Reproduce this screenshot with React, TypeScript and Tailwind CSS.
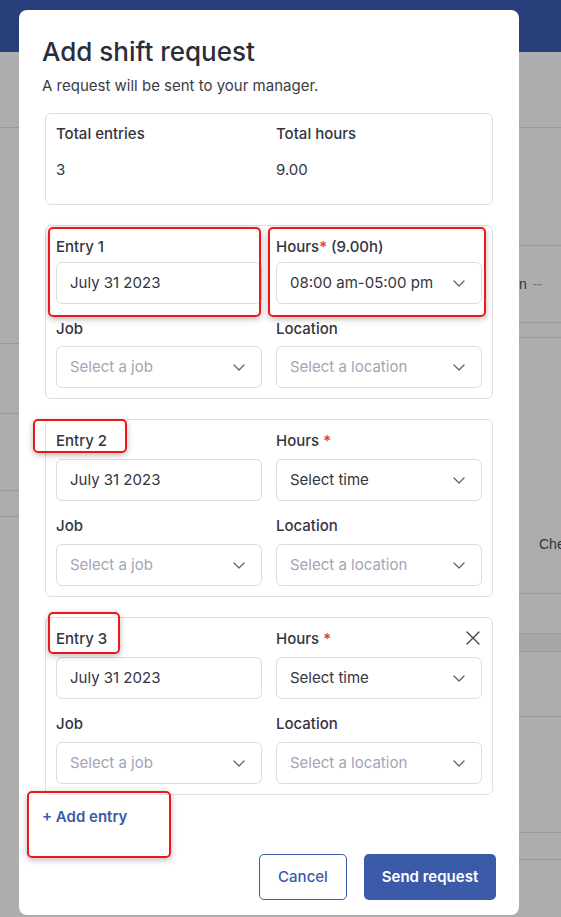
import React from "react";

const Chevron = () => (
  <svg width="12" height="7" viewBox="0 0 12 7" fill="none" className="shrink-0">
    <path d="M1 1L6 6L11 1" stroke="#5f6272" strokeWidth="1.3" strokeLinecap="round" strokeLinejoin="round" />
  </svg>
);

const CloseX = () => (
  <svg width="14" height="14" viewBox="0 0 14 14" fill="none">
    <path d="M1 1L13 13M13 1L1 13" stroke="#45474f" strokeWidth="1.4" strokeLinecap="round" />
  </svg>
);

function Field({ children, select, placeholder }: { children: React.ReactNode; select?: boolean; placeholder?: boolean }) {
  return (
    <div className="flex h-[42px] items-center justify-between rounded-md border border-[#dcdce2] bg-white pl-[13px] pr-[16px]">
      <span className={placeholder ? "text-[15px] text-[#a2a5b8]" : "text-[15px] text-[#33353f]"}>{children}</span>
      {select && <Chevron />}
    </div>
  );
}

function Entry({ n, hours, first, closable }: { n: number; hours?: string; first?: boolean; closable?: boolean }) {
  return (
    <div className="relative mx-[3px] rounded-md border border-[#dedee3] px-[10px] pb-[10px] pt-[11px]">
      {closable && (
        <div className="absolute right-[12px] top-[13px]">
          <CloseX />
        </div>
      )}
      <div className="grid grid-cols-2 gap-x-[14px]">
        <div className="flex flex-col">
          <div className="h-[20px] text-[15px] font-medium leading-[20px] text-[#33353f]">Entry {n}</div>
          <div className={first ? "mt-[5px]" : "mt-[8px]"}>
            <Field>July 31 2023</Field>
          </div>
        </div>
        <div className="flex flex-col">
          <div className="h-[20px] text-[15px] font-medium leading-[20px] text-[#33353f]">
            {first ? (
              <>
                Hours<span className="text-[#e8332f]">*</span> (9.00h)
              </>
            ) : (
              <>
                Hours <span className="text-[#e8332f]">*</span>
              </>
            )}
          </div>
          <div className={first ? "mt-[5px]" : "mt-[8px]"}>
            <Field select>{hours ?? "Select time"}</Field>
          </div>
        </div>
        <div className="mt-[15px] flex flex-col">
          <div className="h-[20px] text-[15px] font-medium leading-[20px] text-[#33353f]">Job</div>
          <div className={first ? "mt-[7px]" : "mt-[8px]"}>
            <Field select placeholder>
              Select a job
            </Field>
          </div>
        </div>
        <div className="mt-[15px] flex flex-col">
          <div className="h-[20px] text-[15px] font-medium leading-[20px] text-[#33353f]">Location</div>
          <div className={first ? "mt-[7px]" : "mt-[8px]"}>
            <Field select placeholder>
              Select a location
            </Field>
          </div>
        </div>
      </div>
    </div>
  );
}

const RedBox = ({ cls }: { cls: string }) => (
  <div className={"pointer-events-none absolute rounded-[5px] border-2 border-[#f0151b] shadow-[0_2px_6px_rgba(0,0,0,0.28)] " + cls} />
);

export default function App() {
  return (
    <div className="relative h-[917px] w-[561px] overflow-hidden bg-[#adadad] font-['Inter','Noto_Sans',sans-serif]">
      {/* background page */}
      <div className="flex h-full flex-col">
        <div className="h-[52px] bg-[#293f7b]" />
        <div className="h-[76px] border-b border-[#999999]" />
        <div className="flex flex-1">
          <div className="flex w-[280px] shrink-0 flex-col">
            <div className="h-[216px] border-b border-[#999999]" />
            <div className="h-[70px] border-b border-[#999999]" />
            <div className="h-[77px] border-b border-[#999999]" />
            <div className="h-[26px] border-b border-[#999999]" />
          </div>
          <div className="flex min-w-0 flex-1 flex-col overflow-hidden whitespace-nowrap font-['Liberation_Sans',sans-serif] text-[14px]">
            <div className="h-[118px] border-b border-[#999999]" />
            <div className="flex h-[77px] items-center border-b border-[#999999] pl-[239px]">
              <span className="text-[#1e3563]">n</span>
              <span className="ml-[6px] text-[#6d7180]">--</span>
            </div>
            <div className="h-[15px] border-b border-[#999999]" />
            <div className="h-[256px] border-b border-[#999999] pl-[259px] pt-[196px]">
              <span className="text-[#2b3447]">Che</span>
            </div>
            <div className="h-[40px] border-b border-[#999999]" />
            <div className="h-[18px] border-b border-[#999999] bg-[#a6a6a6]" />
            <div className="h-[65px] border-b border-[#999999]" />
            <div className="h-[116px] border-b border-[#999999]" />
            <div className="h-[27px] border-b border-[#999999]" />
          </div>
        </div>
      </div>

      {/* modal */}
      <div className="absolute left-[19px] top-[10px] flex h-[905px] w-[500px] flex-col rounded-lg bg-white px-[23px] pt-[25px]">
        <h1 className="text-[26px] font-medium leading-[33px] text-[#2b2d38]">Add shift request</h1>
        <p className="mt-[7px] text-[15px] leading-[22px] text-[#3a3c47]">A request will be sent to your manager.</p>

        <div className="mx-[3px] mt-[16px] rounded-md border border-[#dedee3] px-[10px] pb-[24px] pt-[10px]">
          <div className="grid grid-cols-2 gap-x-[14px]">
            <div className="text-[15px] font-medium leading-[20px] text-[#33353f]">Total entries</div>
            <div className="text-[15px] font-medium leading-[20px] text-[#33353f]">Total hours</div>
            <div className="mt-[16px] text-[15px] leading-[20px] text-[#33353f]">3</div>
            <div className="mt-[16px] text-[15px] leading-[20px] text-[#33353f]">9.00</div>
          </div>
        </div>

        <div className="mt-[20px] flex flex-col gap-[20px]">
          <Entry n={1} first hours="08:00 am-05:00 pm" />
          <Entry n={2} />
          <Entry n={3} closable />
        </div>

        <div className="mt-[12px] text-[15px] font-semibold leading-[20px] text-[#3b5aa8]">+ Add entry</div>

        <div className="mt-[27px] flex justify-end gap-[17px]">
          <button className="h-[46px] w-[88px] rounded-[5px] border border-[#3b5aa8] bg-white text-[15px] font-medium text-[#3b5aa8]">
            Cancel
          </button>
          <button className="h-[46px] w-[132px] rounded-[5px] bg-[#3b5aa8] text-[15px] font-semibold text-white">
            Send request
          </button>
        </div>
      </div>

      {/* annotation boxes */}
      <RedBox cls="left-[48px] top-[227px] h-[90px] w-[213px]" />
      <RedBox cls="left-[268px] top-[227px] h-[90px] w-[218px]" />
      <RedBox cls="left-[33px] top-[419px] h-[34px] w-[94px]" />
      <RedBox cls="left-[48px] top-[612px] h-[42px] w-[72px]" />
      <RedBox cls="left-[27px] top-[791px] h-[67px] w-[144px]" />
    </div>
  );
}
